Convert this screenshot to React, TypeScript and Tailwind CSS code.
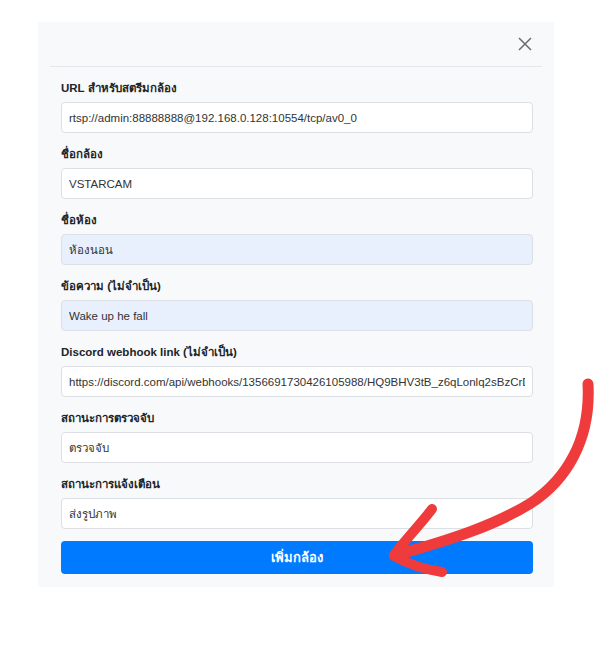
import { useState } from "react";

const fields = [
  { label: "URL สำหรับสตรีมกล้อง", value: "rtsp://admin:88888888@192.168.0.128:10554/tcp/av0_0", filled: false },
  { label: "ชื่อกล้อง", value: "VSTARCAM", filled: false },
  { label: "ชื่อห้อง", value: "ห้องนอน", filled: true },
  { label: "ข้อความ (ไม่จำเป็น)", value: "Wake up he fall", filled: true },
  {
    label: "Discord webhook link (ไม่จำเป็น)",
    value: "https://discord.com/api/webhooks/1356691730426105988/HQ9BHV3tB_z6qLonlq2sBzCrD",
    filled: false,
  },
  { label: "สถานะการตรวจจับ", value: "ตรวจจับ", filled: false },
  { label: "สถานะการแจ้งเตือน", value: "ส่งรูปภาพ", filled: false },
];

export default function App() {
  const [values, setValues] = useState(fields.map((f) => f.value));

  return (
    <div
      className="relative min-h-screen bg-white text-[#212529]"
      style={{ fontFamily: '"Liberation Sans", "Noto Sans", Arial, sans-serif' }}
    >
      <div className="ml-[38px] pt-[22px]">
        <div className="w-[516px] bg-[#f8f9fa] pb-[13px]">
          <div className="mx-3 flex h-[45px] items-center justify-end border-b border-[#e5e7eb] pr-[9px]">
            <button className="text-[#6b6b6b]">
              <svg width="16" height="16" viewBox="0 0 16 16" fill="none" stroke="currentColor" strokeWidth="1.5">
                <path d="M2 2 L14 14 M14 2 L2 14" />
              </svg>
            </button>
          </div>

          <div className="pl-[23px] pr-[21px] pt-[14px]">
            {fields.map((f, i) => (
              <div key={f.label} className="mb-[14px]">
                <label className="mb-[6px] block text-[11.5px] font-bold leading-[15px]">{f.label}</label>
                <input
                  value={values[i]}
                  onChange={(e) => setValues(values.map((v, j) => (j === i ? e.target.value : v)))}
                  className={
                    "h-[31px] w-full rounded-[4px] border border-[#dcdfe3] px-[7px] text-[11.5px] text-[#333] outline-none " +
                    (f.filled ? "bg-[#e8f0fe]" : "bg-white")
                  }
                />
              </div>
            ))}
            <button className="-mt-[2px] h-[33px] w-full rounded-[4px] bg-[#007bff] text-[13px] font-bold text-white">
              เพิ่มกล้อง
            </button>
          </div>
        </div>
      </div>

      <svg className="pointer-events-none absolute left-0 top-0" width="616" height="645" viewBox="0 0 616 645">
        <path
          d="M588 384 C591 440 566 480 531 503 C496 525 450 540 396 555"
          fill="none"
          stroke="#ef3b3b"
          strokeWidth="11"
          strokeLinecap="round"
        />
        <path d="M432 509 C420 525 405 540 394 555" fill="none" stroke="#ef3b3b" strokeWidth="10" strokeLinecap="round" />
        <path d="M394 556 C410 565 428 570 442 572" fill="none" stroke="#ef3b3b" strokeWidth="10" strokeLinecap="round" />
      </svg>
    </div>
  );
}
